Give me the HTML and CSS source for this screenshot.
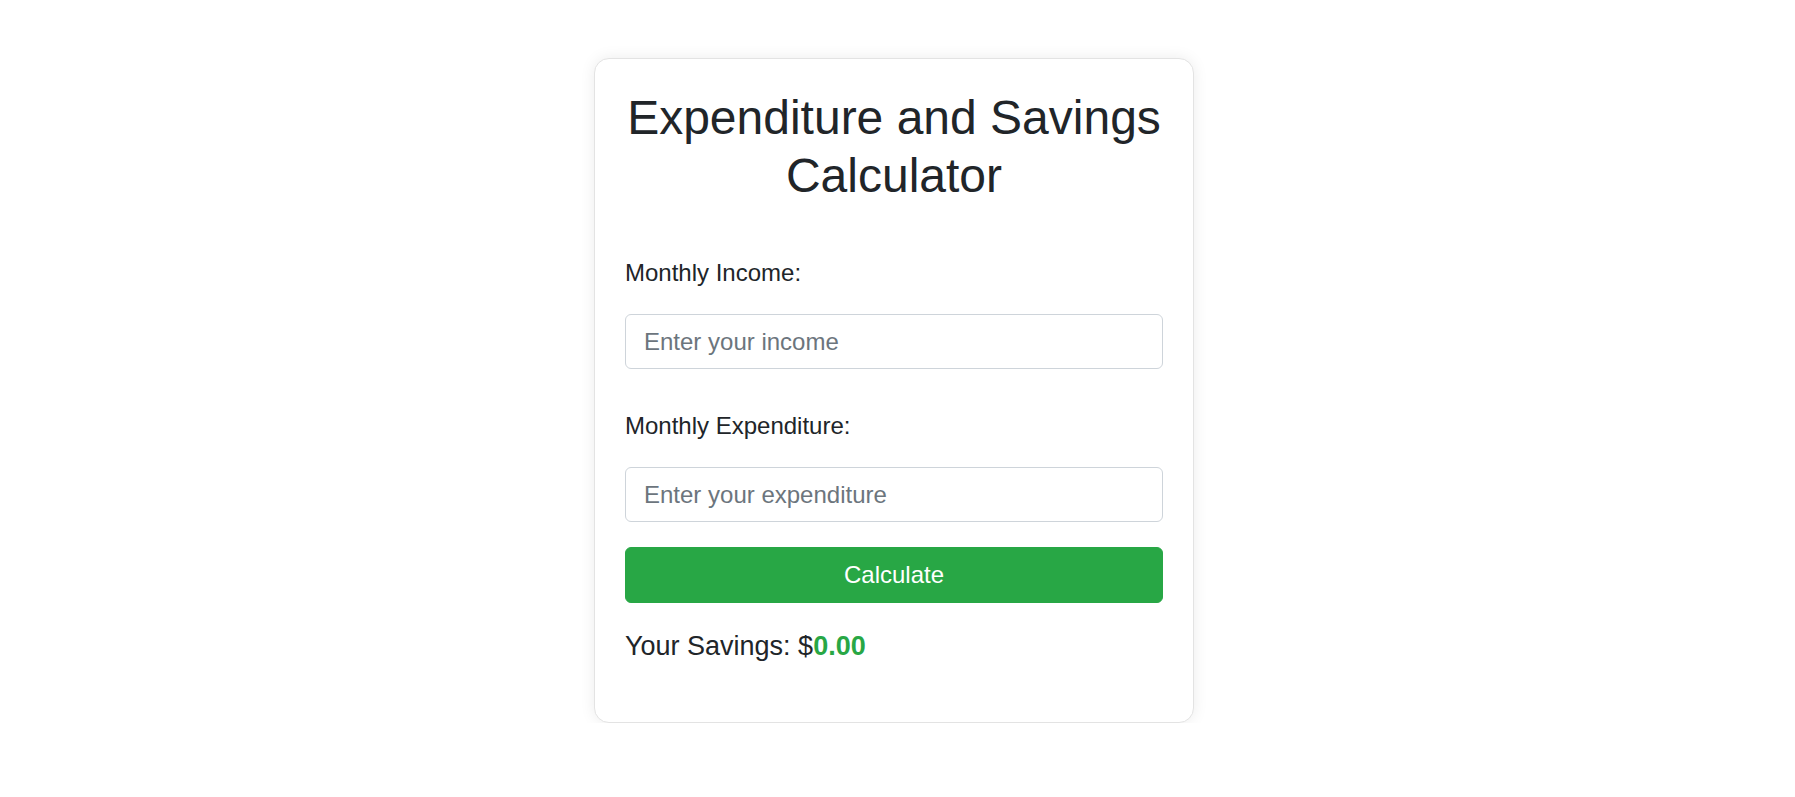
FILE: index.html
```html
<!DOCTYPE html>
<html lang="en">
<head>
<meta charset="utf-8">
<title>Expenditure and Savings Calculator</title>
<link rel="stylesheet" href="styles.css">
</head>
<body>
  <div class="card">
    <h1 class="title">Expenditure and Savings Calculator</h1>
    <label class="label label-first" for="income">Monthly Income:</label>
    <input class="field field-first" id="income" type="number" placeholder="Enter your income">
    <label class="label" for="expenditure">Monthly Expenditure:</label>
    <input class="field" id="expenditure" type="number" placeholder="Enter your expenditure">
    <button class="btn" type="button">Calculate</button>
    <p class="result">Your Savings: $<span class="amount">0.00</span></p>
  </div>
</body>
</html>
```

FILE: styles.css
```css
* {
  box-sizing: border-box;
}

html, body {
  margin: 0;
  padding: 0;
  background: #ffffff;
}

body {
  font-family: "Liberation Sans", Arial, sans-serif;
  color: #212529;
  padding: 58px 7px 0 0;
}

.card {
  width: 600px;
  margin: 0 auto;
  padding: 30px;
  background: #ffffff;
  border: 1px solid #e3e3e3;
  border-radius: 15px;
  box-shadow: 0 0 15px rgba(0, 0, 0, 0.08);
  display: flex;
  flex-direction: column;
}

.title {
  margin: 0 0 51px;
  font-size: 48px;
  font-weight: 400;
  line-height: 57.6px;
  text-align: center;
  color: #212529;
}

.label {
  display: block;
  font-size: 24px;
  line-height: 36px;
  margin-bottom: 23px;
}

.field {
  display: block;
  width: 100%;
  height: 55px;
  padding: 0 18px;
  font-family: "Liberation Sans", Arial, sans-serif;
  font-size: 24px;
  line-height: 36px;
  color: #495057;
  background: #ffffff;
  border: 1px solid #ced4da;
  border-radius: 6px;
  margin-bottom: 25px;
  outline: none;
}

.field-first {
  margin-bottom: 39px;
}

.field::placeholder {
  color: #6c757d;
  opacity: 1;
}

.btn {
  display: block;
  width: 100%;
  height: 56px;
  padding: 0;
  font-family: "Liberation Sans", Arial, sans-serif;
  font-size: 24px;
  line-height: 36px;
  color: #ffffff;
  background: #28a745;
  border: 1px solid #28a745;
  border-radius: 6px;
  margin-bottom: 27px;
  cursor: pointer;
}

.result {
  margin: 0 0 29px;
  font-size: 27px;
  line-height: 32.4px;
}

.amount {
  font-weight: 700;
  color: #28a745;
}
```
